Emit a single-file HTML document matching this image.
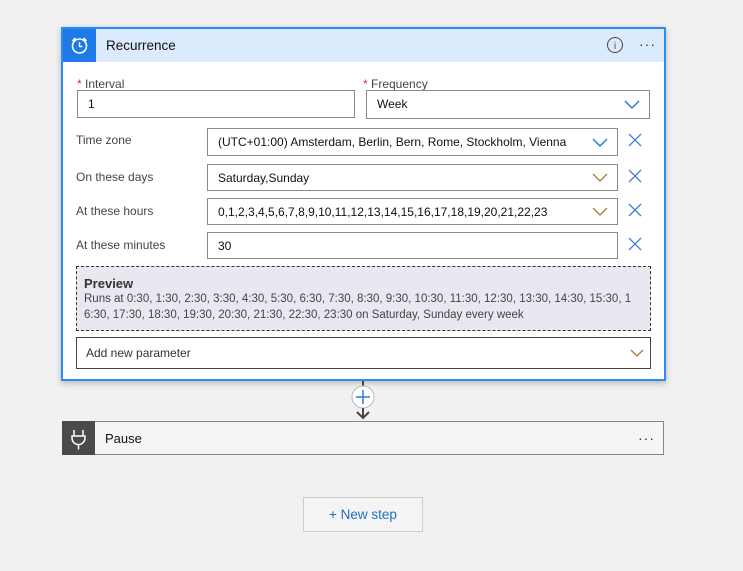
<!DOCTYPE html>
<html><head><style>
*{box-sizing:border-box;margin:0;padding:0}
body{width:743px;height:571px;background:#f1f1f1;font-family:"Liberation Sans",sans-serif;font-size:12px;color:#222;position:relative;overflow:hidden}
.a{position:absolute}
.card{left:61px;top:27px;width:605px;height:354px;background:#fff;border:2px solid #2d8cf0;box-shadow:0 2px 6px rgba(0,0,0,.25)}
.hdr{left:0;top:0;width:601px;height:33px;background:#dbeafd}
.ic{left:0;top:0;width:33px;height:33px;background:#1e7ae8}
.lbl{color:#444;font-size:12px}
.inp{border:1px solid #8a8a8a;background:#fff;padding-left:10px;line-height:27px;font-size:12px;color:#111}
</style></head><body>
<div class="a card">
 <div class="a hdr"></div>
 <div class="a ic"><svg width="33" height="33"><circle cx="16.5" cy="17" r="7" fill="none" stroke="#fff" stroke-width="1.6"/><path d="M16.5 13v4.5h3" fill="none" stroke="#fff" stroke-width="1.4"/><path d="M9.5 12l3-3M23.5 12l-3-3" stroke="#fff" stroke-width="1.6"/></svg></div>
 <div class="a" style="left:43px;top:9px;font-size:13.5px;color:#111">Recurrence</div>
 <svg class="a" style="left:543px;top:7px" width="18" height="18"><circle cx="9" cy="9" r="7.5" fill="none" stroke="#444" stroke-width="1"/><text x="9" y="13" font-size="10" text-anchor="middle" fill="#7a2b9a" font-family="Liberation Sans">i</text></svg>
 <div class="a" style="left:576px;top:7px;font-size:14px;color:#333;letter-spacing:1px">···</div>
 <div class="a lbl" style="left:14px;top:48px"><span style="color:#c33">*</span> Interval</div>
 <div class="a inp" style="left:14px;top:61px;width:278px;height:28px">1</div>
 <div class="a lbl" style="left:300px;top:48px"><span style="color:#c33">*</span> Frequency</div>
 <div class="a inp" style="left:303px;top:61px;width:284px;height:29px">Week</div>
 <svg class="a" style="left:561px;top:71px" width="16" height="10"><path d="M1 1l7 7 7-7" fill="none" stroke="#2b7cd3" stroke-width="1.5"/></svg>
 <div class="a lbl" style="left:13px;top:104px">Time zone</div>
 <div class="a inp" style="left:144px;top:99px;width:411px;height:28px">(UTC+01:00) Amsterdam, Berlin, Bern, Rome, Stockholm, Vienna</div>
 <svg class="a" style="left:529px;top:109px" width="16" height="10"><path d="M1 1l7 7 7-7" fill="none" stroke="#2b7cd3" stroke-width="1.5"/></svg>
 <div class="a lbl" style="left:13px;top:141px">On these days</div>
 <div class="a inp" style="left:144px;top:135px;width:411px;height:27px">Saturday,Sunday</div>
 <svg class="a" style="left:529px;top:144px" width="16" height="10"><path d="M1 1l7 7 7-7" fill="none" stroke="#a77a3a" stroke-width="1.3"/></svg>
 <div class="a lbl" style="left:13px;top:175px">At these hours</div>
 <div class="a inp" style="left:144px;top:169px;width:411px;height:27px">0,1,2,3,4,5,6,7,8,9,10,11,12,13,14,15,16,17,18,19,20,21,22,23</div>
 <svg class="a" style="left:529px;top:178px" width="16" height="10"><path d="M1 1l7 7 7-7" fill="none" stroke="#a77a3a" stroke-width="1.3"/></svg>
 <div class="a lbl" style="left:13px;top:209px">At these minutes</div>
 <div class="a inp" style="left:144px;top:203px;width:411px;height:27px">30</div>
 <svg class="a" style="left:565px;top:104px" width="14" height="160"><g stroke="#3b7fd8" stroke-width="1.3"><path d="M1 1l12 12M13 1L1 13"/><path d="M1 37l12 12M13 37L1 49"/><path d="M1 71l12 12M13 71L1 83"/><path d="M1 105l12 12M13 105L1 117"/></g></svg>
 <div class="a" style="left:13px;top:237px;width:575px;height:65px;background:#e8e8f1;border:1px dashed #333;padding:9px 7px">
  <div style="font-weight:bold;font-size:13px;color:#333">Preview</div>
  <div style="font-size:11.5px;color:#444;line-height:16px;margin-top:0px;width:552px;word-break:break-all">Runs at 0:30, 1:30, 2:30, 3:30, 4:30, 5:30, 6:30, 7:30, 8:30, 9:30, 10:30, 11:30, 12:30, 13:30, 14:30, 15:30, 16:30, 17:30, 18:30, 19:30, 20:30, 21:30, 22:30, 23:30 on Saturday, Sunday every week</div>
 </div>
 <div class="a" style="left:13px;top:308px;width:575px;height:32px;border:1px solid #444;padding-left:9px;line-height:31px;color:#333">Add new parameter</div>
 <svg class="a" style="left:567px;top:320px" width="14" height="9"><path d="M1 1l6 6 6-6" fill="none" stroke="#a77a3a" stroke-width="1.3"/></svg>
</div>
<div class="a" style="left:362px;top:381px;width:2px;height:6px;background:#444"></div>
<svg class="a" style="left:350px;top:384px" width="26" height="38"><circle cx="13" cy="13" r="11" fill="#fff" stroke="#bbb"/><path d="M13 6v14M6 13h14" stroke="#2b7cd3" stroke-width="1.5"/><path d="M13 24v10M7 28l6 6 6-6" fill="none" stroke="#444" stroke-width="2"/></svg>
<div class="a" style="left:62px;top:421px;width:602px;height:34px;background:#f5f5f5;border:1px solid #888"></div>
<div class="a" style="left:62px;top:421px;width:33px;height:34px;background:#4a4a4a"><svg width="33" height="34"><path d="M12 9v6M21 9v6M10 15h13v2a6.5 6.5 0 0 1-13 0z M16.5 23.5v5" fill="none" stroke="#fff" stroke-width="1.5"/></svg></div>
<div class="a" style="left:105px;top:431px;font-size:13px;color:#111">Pause</div>
<div class="a" style="left:638px;top:430px;font-size:14px;color:#333;letter-spacing:1px">···</div>
<div class="a" style="left:303px;top:497px;width:120px;height:35px;border:1px solid #ccc;background:#f4f4f4;text-align:center;line-height:33px;font-size:13.5px;color:#1f6fc5">+ New step</div>
</body></html>
